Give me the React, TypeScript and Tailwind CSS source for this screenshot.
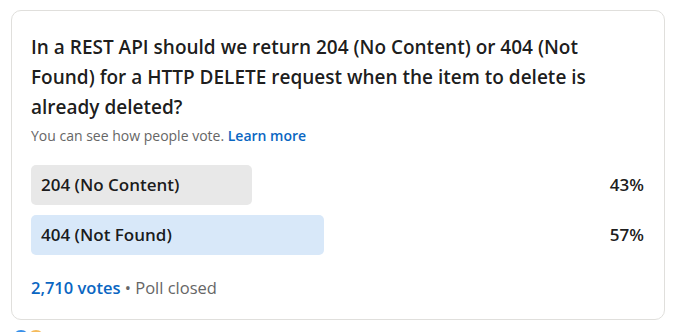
const options = [
  { label: "204 (No Content)", pct: 43, bg: "bg-[#e8e8e8]" },
  { label: "404 (Not Found)", pct: 57, bg: "bg-[#d8e8f9]" },
];

export default function App() {
  return (
    <div
      className="min-h-screen bg-white pl-[11px] pt-[10px] text-[rgba(0,0,0,0.9)]"
      style={{ fontFamily: '"Open Sans", "Noto Sans", sans-serif' }}
    >
      <div className="w-[654px] rounded-[10px] border border-[#e0dfdc] pl-[19px] pr-5 pt-[21px] pb-[19px]">
        <p className="text-[19px] leading-[30px] font-semibold">
          In a REST API should we return 204 (No Content) or 404 (Not Found) for a HTTP DELETE request when the item to delete is already deleted?
        </p>
        <p className="mt-1 text-[14px] leading-5 text-[#666]">
          You can see how people vote.{" "}
          <span className="font-semibold text-[#0a66c2]">Learn more</span>
        </p>

        <div className="mt-[19px] flex flex-col gap-[10px]">
          {options.map((o) => (
            <div key={o.label} className="flex items-center">
              <div className="w-[514px]">
                <div
                  className={`flex h-10 items-center rounded-[5px] px-[10px] ${o.bg}`}
                  style={{ width: `${o.pct}%` }}
                >
                  <span className="whitespace-nowrap text-[17px] font-semibold">{o.label}</span>
                </div>
              </div>
              <div className="flex-1 text-right text-[17px] font-semibold">{o.pct}%</div>
            </div>
          ))}
        </div>

        <p className="mt-[21px] text-[16.5px] leading-6 text-[#666]">
          <span className="font-semibold text-[#0a66c2]">2,710 votes</span> • Poll closed
        </p>
      </div>

      <div className="mt-[10px] flex pl-[2px]">
        <span className="h-4 w-4 rounded-full bg-[#378fe9]" />
        <span className="-ml-[1px] h-4 w-4 rounded-full bg-[#f5bb5c]" />
      </div>
    </div>
  );
}
